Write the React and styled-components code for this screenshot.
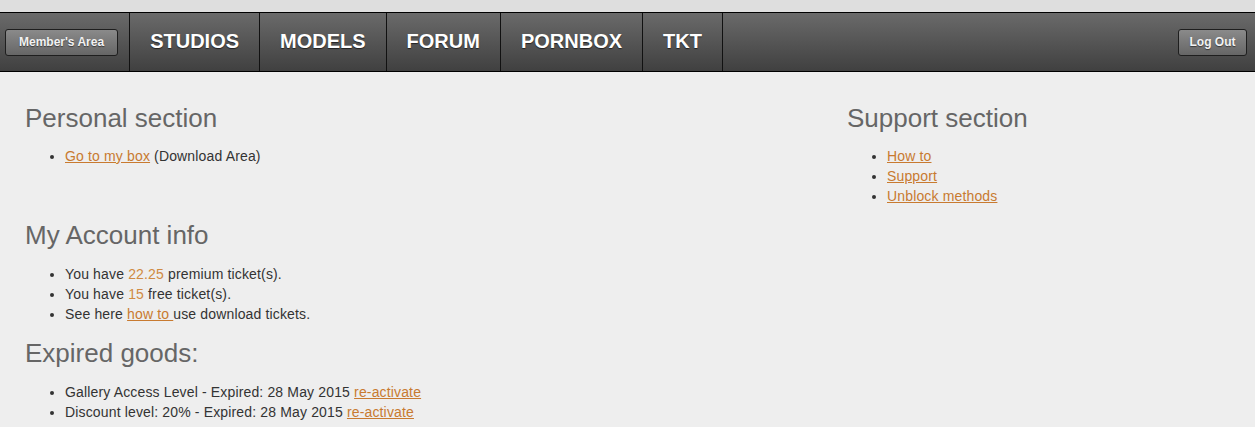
import React from "react";
import styled, { createGlobalStyle } from "styled-components";

const Global = createGlobalStyle`
  html, body { margin: 0; padding: 0; }
  body {
    background: #eeeeee;
    font-family: "Liberation Sans", Arial, sans-serif;
    color: #333;
  }
`;

const TopStrip = styled.div`
  height: 12px;
  background: #dedede;
`;

const NavBar = styled.div`
  display: flex;
  align-items: stretch;
  height: 58px;
  border-top: 1px solid #000;
  border-bottom: 1px solid #000;
  background: linear-gradient(#6a6a6a, #404040);
`;

const NavSide = styled.div`
  display: flex;
  align-items: center;
  padding: ${(p) => p.$pad};
  margin-left: ${(p) => (p.$right ? "auto" : "0")};
`;

const NavButton = styled.button`
  font-family: "Liberation Sans", Arial, sans-serif;
  font-weight: bold;
  font-size: 12px;
  line-height: 13px;
  color: #f2f2f2;
  padding: 6px ${(p) => p.$px}px;
  border: 1px solid #1e1e1e;
  border-radius: 3px;
  background: linear-gradient(#8a8a8a, #666);
  text-shadow: 0 1px 1px rgba(0, 0, 0, 0.5);
  cursor: pointer;
`;

const NavList = styled.nav`
  display: flex;
  border-left: 1px solid #111;
`;

const NavItem = styled.a`
  display: flex;
  align-items: center;
  padding: 0 20px 2px;
  border-right: 1px solid #111;
  color: #fff;
  font-weight: bold;
  font-size: 20px;
  text-decoration: none;
  text-shadow: 0 1px 1px rgba(0, 0, 0, 0.6);
`;

const Content = styled.main`
  padding: 0 25px;
`;

const TopRow = styled.div`
  display: grid;
  grid-template-columns: 822px 1fr;
  padding-top: 32px;
  margin-bottom: 15px;
`;

const Section = styled.section`
  margin-bottom: ${(p) => p.$mb || 0}px;
`;

const Heading = styled.h2`
  margin: 0;
  font-size: 26px;
  line-height: 29px;
  font-weight: normal;
  color: #666;
`;

const List = styled.ul`
  margin: ${(p) => p.$mt || 13}px 0 0;
  padding-left: 40px;
  font-size: 14px;
  line-height: 20px;
  letter-spacing: 0.15px;
  color: #333;
`;

const Link = styled.a`
  color: #c87a30;
  text-decoration: underline;
`;

const Num = styled.span`
  color: #d08a42;
`;

export default function App() {
  return (
    <>
      <Global />
      <TopStrip />
      <NavBar>
        <NavSide $pad="0 11px 0 5px">
          <NavButton $px={13}>Member's Area</NavButton>
        </NavSide>
        <NavList>
          <NavItem href="#">STUDIOS</NavItem>
          <NavItem href="#">MODELS</NavItem>
          <NavItem href="#">FORUM</NavItem>
          <NavItem href="#">PORNBOX</NavItem>
          <NavItem href="#">TKT</NavItem>
        </NavList>
        <NavSide $right $pad="0 8px 0 0">
          <NavButton $px={10.5}>Log Out</NavButton>
        </NavSide>
      </NavBar>
      <Content>
        <TopRow>
          <Section>
            <Heading>Personal section</Heading>
            <List>
              <li>
                <Link href="#">Go to my box</Link> (Download Area)
              </li>
            </List>
          </Section>
          <Section>
            <Heading>Support section</Heading>
            <List>
              <li><Link href="#">How to</Link></li>
              <li><Link href="#">Support</Link></li>
              <li><Link href="#">Unblock methods</Link></li>
            </List>
          </Section>
        </TopRow>
        <Section $mb={15}>
          <Heading>My Account info</Heading>
          <List $mt={14}>
            <li>You have <Num>22.25</Num> premium ticket(s).</li>
            <li>You have <Num>15</Num> free ticket(s).</li>
            <li>See here <Link href="#">how to </Link>use download tickets.</li>
          </List>
        </Section>
        <Section>
          <Heading>Expired goods:</Heading>
          <List $mt={14}>
            <li>Gallery Access Level - Expired: 28 May 2015 <Link href="#">re-activate</Link></li>
            <li>Discount level: 20% - Expired: 28 May 2015 <Link href="#">re-activate</Link></li>
          </List>
        </Section>
      </Content>
    </>
  );
}
